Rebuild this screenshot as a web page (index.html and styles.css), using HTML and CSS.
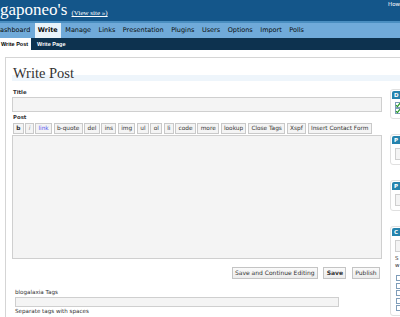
FILE: index.html
```html
<!DOCTYPE html>
<html>
<head>
<meta charset="utf-8">
<title>Write Post</title>
<link rel="stylesheet" href="styles.css">
</head>
<body>
<div class="head">
  <h1 class="blog">gaponeo's <a class="viewsite" href="#">(View site »)</a></h1>
  <div class="user">How</div>
</div>
<ul class="menu">
  <li class="first">ashboard</li>
  <li class="current">Write</li>
  <li>Manage</li>
  <li>Links</li>
  <li>Presentation</li>
  <li>Plugins</li>
  <li>Users</li>
  <li>Options</li>
  <li>Import</li>
  <li>Polls</li>
</ul>
<ul class="submenu">
  <li class="current">Write Post</li>
  <li>Write Page</li>
</ul>
<div class="wrap">
  <h2>Write Post</h2>
  <div class="cols">
    <div class="main">
      <div class="lbl">Title</div>
      <input class="field title" type="text">
      <div class="lbl post">Post</div>
      <div class="qt">
        <button class="qb qb-b">b</button>
        <button class="qb qb-i">i</button>
        <button class="qb qb-link">link</button>
        <button class="qb">b-quote</button>
        <button class="qb">del</button>
        <button class="qb">ins</button>
        <button class="qb">img</button>
        <button class="qb">ul</button>
        <button class="qb">ol</button>
        <button class="qb">li</button>
        <button class="qb">code</button>
        <button class="qb">more</button>
        <button class="qb">lookup</button>
        <button class="qb">Close Tags</button>
        <button class="qb">Xspf</button>
        <button class="qb">Insert Contact Form</button>
      </div>
      <textarea class="ta"></textarea>
      <div class="actions">
        <button class="btn">Save and Continue Editing</button>
        <button class="btn bold">Save</button>
        <button class="btn">Publish</button>
      </div>
      <div class="tags">
        <div class="tlbl">blogalaxia Tags</div>
        <input class="field tagin" type="text">
        <div class="tlbl">Separate tags with spaces</div>
      </div>
    </div>
    <div class="side">
      <div class="box">
        <h3>D</h3>
        <div class="content">
          <div class="cbrow"><span class="cb"><svg viewBox="0 0 6 6" width="6" height="6"><path d="M1 3.2 L2.4 4.6 L5 1.2" fill="none" stroke="#2a9a2a" stroke-width="1.2"/></svg></span></div>
          <div class="cbrow"><span class="cb"><svg viewBox="0 0 6 6" width="6" height="6"><path d="M1 3.2 L2.4 4.6 L5 1.2" fill="none" stroke="#2a9a2a" stroke-width="1.2"/></svg></span></div>
        </div>
      </div>
      <div class="box">
        <h3>P</h3>
        <div class="content"><input class="field sidein" type="text"></div>
      </div>
      <div class="box">
        <h3>P</h3>
        <div class="content"><input class="field sidein" type="text"></div>
      </div>
      <div class="box">
        <h3>C</h3>
        <div class="content">
          <input class="field sidein" type="text">
          <div class="note">S<br>w</div>
          <div class="cats">
            <span class="cb"></span>
            <span class="cb"></span>
            <span class="cb"></span>
            <span class="cb"></span>
            <span class="cb"></span>
          </div>
        </div>
      </div>
    </div>
  </div>
</div>
</body>
</html>
```
FILE: styles.css
```css
* { box-sizing: border-box; }
html, body { background: #fff; }
body {
  margin: 0;
  width: 400px;
  height: 317px;
  overflow: hidden;
  font-family: "DejaVu Sans", Verdana, sans-serif;
  color: #333;
}

/* header */
.head {
  display: flex;
  align-items: flex-start;
  height: 23px;
  background: #14568a;
  border-bottom: 2px solid #4a8ec0;
}
.blog {
  margin: 0;
  font: normal 17px/20px "Liberation Serif", serif;
  color: #fff;
  white-space: nowrap;
}
.viewsite {
  font-size: 7px;
  color: #fff;
  text-decoration: underline;
}
.user {
  margin-left: auto;
  font: 5.5px/9px "DejaVu Sans", sans-serif;
  color: #fff;
}

/* menus */
.menu {
  display: flex;
  margin: 0;
  padding: 0;
  list-style: none;
  height: 15px;
  background: #70aad9;
  font: 6.5px/15px "DejaVu Sans", sans-serif;
  white-space: nowrap;
}
.menu li {
  padding: 0 3px;
  margin-right: 1.5px;
  color: #0a0a0a;
}
.menu .first { margin-left: -3px; }
.menu .current {
  background: #e9f3fa;
  font-weight: bold;
}
.submenu {
  display: flex;
  margin: 0;
  padding: 0;
  list-style: none;
  height: 12px;
  background: #0d324f;
  font: bold 5.5px/12px "Liberation Sans", sans-serif;
  color: #fff;
  white-space: nowrap;
}
.submenu li {
  padding: 0 3px;
  margin-right: 3px;
}
.submenu .current {
  margin-left: -2px;
  background: #fff;
  color: #000;
}

/* content wrap */
.wrap {
  width: 600px;
  margin: 7px 0 0 5px;
  padding: 6px 0 0 6px;
  border: 1px solid #d5d5d5;
  border-right: 0;
  border-bottom: 0;
}
.wrap h2 {
  margin: 0 0 8px;
  height: 17px;
  padding-left: 1px;
  border-bottom: 6px solid #eef5fb;
  font: normal 14.5px/18px "Liberation Serif", serif;
  color: #333;
}
.cols {
  display: grid;
  grid-template-columns: 370px 150px;
  column-gap: 8px;
  align-items: start;
}

.main { display: flex; flex-direction: column; }
.lbl {
  font: bold 5.4px/6px "DejaVu Sans", sans-serif;
  color: #333;
  padding-left: 1px;
}
.lbl.post { margin-top: 2px; }
.field {
  display: block;
  margin: 0;
  padding: 0;
  border: 1px solid #cfcfcf;
  background: #f4f4f4;
  outline: none;
}
.title {
  width: 370px;
  height: 15px;
  margin-top: 2px;
}

.qt {
  display: flex;
  gap: 1.6px;
  margin-top: 3px;
  padding-left: 1px;
  height: 11px;
}
.qb {
  margin: 0;
  height: 11px;
  padding: 0 2.3px;
  border: 1px solid #c9c9c9;
  background: #f4f4f4;
  font: 5.8px/9px "DejaVu Sans", sans-serif;
  color: #333;
  white-space: nowrap;
}
.qb-b { font-weight: bold; }
.qb-i { font-style: italic; color: #888; }
.qb-link { color: #5555ee; }

.ta {
  display: block;
  width: 370px;
  height: 124px;
  margin: 1px 0 0;
  padding: 0;
  border: 1px solid #cfcfcf;
  background: #f4f4f4;
  resize: none;
  outline: none;
}

.actions {
  display: flex;
  justify-content: flex-end;
  gap: 5.5px;
  margin-top: 8px;
  padding-right: 2px;
}
.btn {
  margin: 0;
  height: 12px;
  padding: 0 2.35px;
  border: 1px solid #c4c4c4;
  background: linear-gradient(#fafafa, #ececec);
  font: 6px/10px "DejaVu Sans", sans-serif;
  color: #333;
  white-space: nowrap;
}
.btn.bold { font-weight: bold; }

.tags {
  margin-top: 10px;
  padding-left: 3px;
}
.tlbl {
  font: 5.6px/7px "DejaVu Sans", sans-serif;
  color: #333;
  white-space: nowrap;
}
.tagin {
  width: 324px;
  height: 10px;
  margin: 1px 0 1px;
}

/* sidebar */
.side { display: flex; flex-direction: column; }
.box {
  margin-bottom: 15px;
  padding: 1px;
  border: 1px solid #e0e0e0;
  border-radius: 3px;
  background: #fff;
}
.box h3 {
  margin: 0;
  height: 8px;
  padding-left: 2px;
  border-radius: 2px 2px 0 0;
  background: #2583ad;
  color: #fff;
  font: bold 5.5px/8px "DejaVu Sans", sans-serif;
}
.box .content {
  padding: 3px;
}
.cbrow {
  display: flex;
  align-items: center;
  height: 6px;
}
.cb {
  display: block;
  width: 6px;
  height: 6px;
  border: 1px solid #7f9db9;
  background: #fff;
}
.cb svg { display: block; margin: -1px 0 0 -1px; }
.sidein {
  width: 120px;
  height: 12px;
  margin-top: 1px;
}
.note {
  margin-top: 3px;
  font: 5.5px/6.5px "DejaVu Sans", sans-serif;
  color: #333;
}
.cats {
  display: flex;
  flex-direction: column;
  gap: 1.5px;
  margin-top: 7px;
  padding-left: 1px;
}
```
